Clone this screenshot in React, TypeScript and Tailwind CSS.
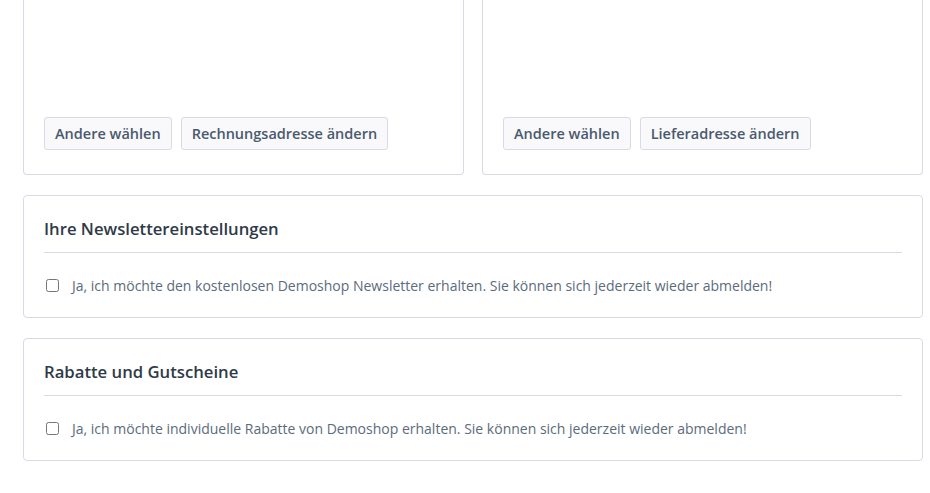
const font = { fontFamily: '"Open Sans", "Noto Sans", sans-serif' };

function AddressCard({ changeLabel }: { changeLabel: string }) {
  return (
    <div className="h-[175px] rounded-b border border-t-0 border-[#dadae5] bg-white px-5 pt-[117px]">
      <div className="flex gap-[9px]">
        <button className="h-[33px] rounded-[3px] border border-[#dadae5] bg-[#f9f9fb] px-[10px] text-[14.5px] font-semibold text-[#4a5a6e]">
          Andere wählen
        </button>
        <button className="h-[33px] rounded-[3px] border border-[#dadae5] bg-[#f9f9fb] px-[10px] text-[14.5px] font-semibold text-[#4a5a6e]">
          {changeLabel}
        </button>
      </div>
    </div>
  );
}

function ConsentCard({ title, label }: { title: string; label: string }) {
  return (
    <div className="rounded border border-[#dadae5] bg-white px-5 pt-5 pb-[21px]">
      <h2 className="border-b border-[#dadae5] pb-[11px] text-[16.7px] leading-[25px] font-semibold text-[#2f3a48]">
        {title}
      </h2>
      <label className="mt-[22px] flex items-center">
        <input
          type="checkbox"
          className="ml-[2px] h-[13px] w-[13px] accent-[#5b6b7c]"
        />
        <span className="ml-[13px] text-[14px] leading-[21px] text-[#5b6b7c]">
          {label}
        </span>
      </label>
    </div>
  );
}

export default function App() {
  return (
    <div className="min-h-screen bg-white" style={font}>
      <div className="ml-[23px] w-[900px]">
        <div className="grid grid-cols-2 gap-[18px]">
          <AddressCard changeLabel="Rechnungsadresse ändern" />
          <AddressCard changeLabel="Lieferadresse ändern" />
        </div>

        <div className="mt-5">
          <ConsentCard
            title="Ihre Newslettereinstellungen"
            label="Ja, ich möchte den kostenlosen Demoshop Newsletter erhalten. Sie können sich jederzeit wieder abmelden!"
          />
        </div>

        <div className="mt-5">
          <ConsentCard
            title="Rabatte und Gutscheine"
            label="Ja, ich möchte individuelle Rabatte von Demoshop erhalten. Sie können sich jederzeit wieder abmelden!"
          />
        </div>
      </div>
    </div>
  );
}
